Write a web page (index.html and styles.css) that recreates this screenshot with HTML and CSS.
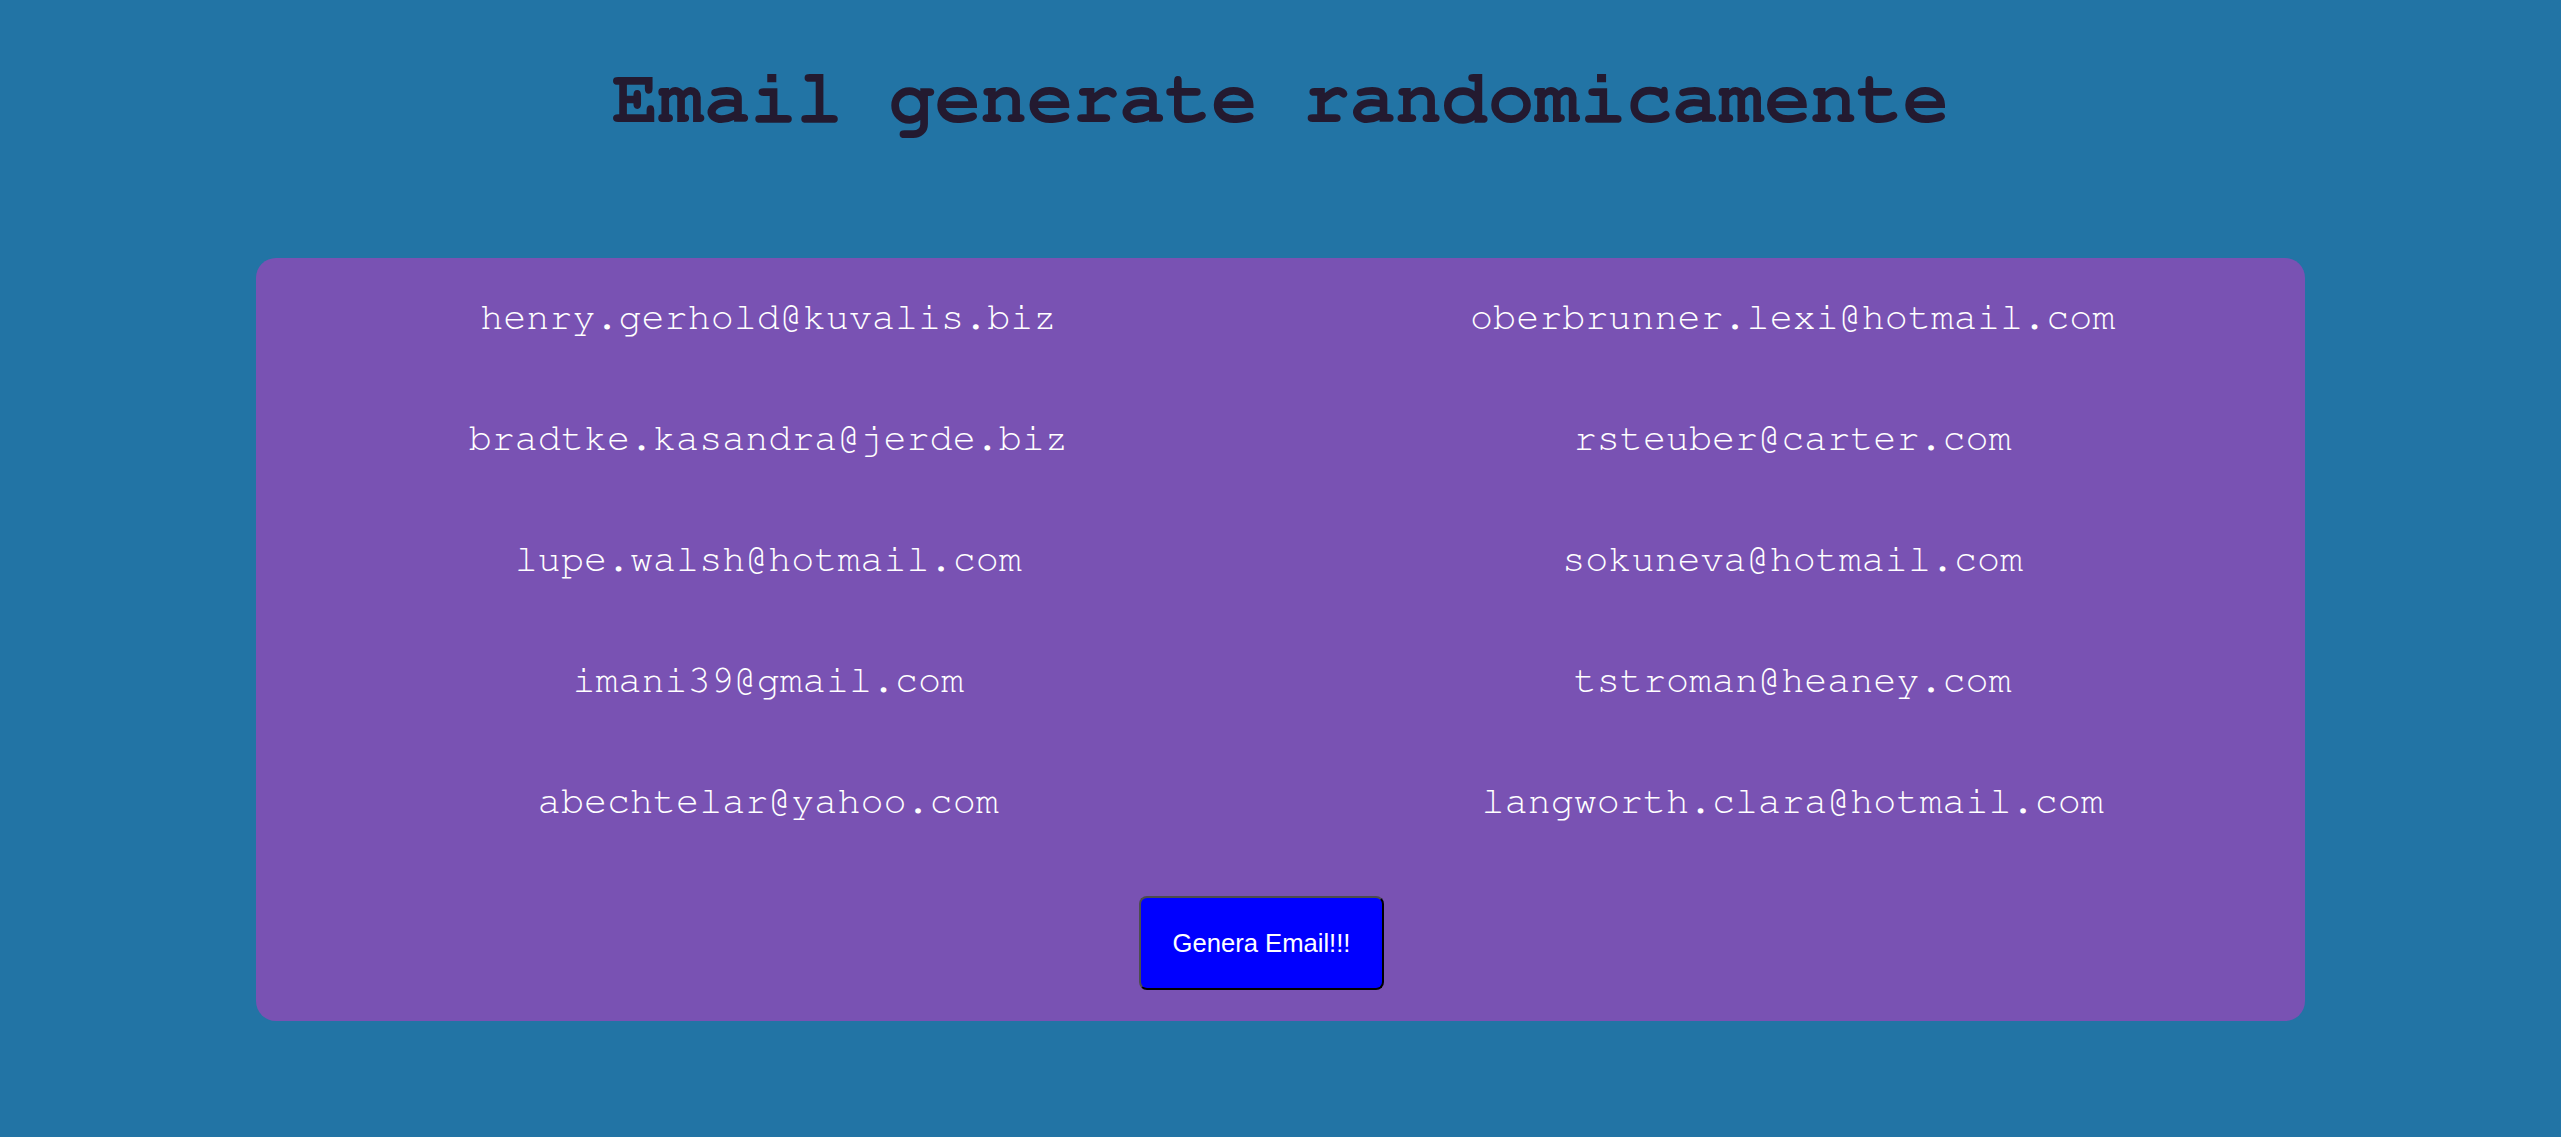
FILE: index.html
```html
<!DOCTYPE html>
<html lang="it">
<head>
<meta charset="utf-8">
<title>Email generate randomicamente</title>
<link rel="stylesheet" href="styles.css">
</head>
<body>
  <h1 class="title">Email generate randomicamente</h1>
  <main class="card">
    <div class="email-grid">
      <p class="email">henry.gerhold@kuvalis.biz</p>
      <p class="email">oberbrunner.lexi@hotmail.com</p>
      <p class="email">bradtke.kasandra@jerde.biz</p>
      <p class="email">rsteuber@carter.com</p>
      <p class="email">lupe.walsh@hotmail.com</p>
      <p class="email">sokuneva@hotmail.com</p>
      <p class="email">imani39@gmail.com</p>
      <p class="email">tstroman@heaney.com</p>
      <p class="email">abechtelar@yahoo.com</p>
      <p class="email">langworth.clara@hotmail.com</p>
    </div>
    <div class="actions">
      <button class="btn" type="button">Genera Email!!!</button>
    </div>
  </main>
</body>
</html>
```

FILE: styles.css
```css
* { box-sizing: border-box; }

html, body {
  margin: 0;
  padding: 0;
}

body {
  background: #2274a5;
  font-family: "Nimbus Mono PS", "Nimbus Mono L", "FreeMono", "Courier New", "Liberation Mono", monospace;
  min-height: 100vh;
  padding-top: 1px;
}

.title {
  font-family: "Nimbus Mono PS", "Nimbus Mono L", "FreeMono", "Courier New", "Liberation Mono", monospace;
  font-weight: bold;
  font-size: 3vw;
  line-height: 87px;
  color: #231a30;
  text-align: center;
  margin: 55px 0 115px;
}

.card {
  width: 80%;
  margin: 0 auto;
  background: #7952b3;
  border-radius: 20px;
  padding-bottom: 31px;
}

.email-grid {
  display: grid;
  grid-template-columns: 1fr 1fr;
}

.email {
  margin: 1em 0;
  font-size: 1.5vw;
  line-height: 44px;
  color: #ffffff;
  text-align: center;
}

.actions {
  display: flex;
  justify-content: center;
  padding-top: 34px;
}

.btn {
  font-family: "Liberation Sans", Arial, sans-serif;
  font-size: 1vw;
  line-height: 30px;
  color: #ffffff;
  background: #0000ff;
  border: 2px solid;
  border-color: #4d4d4d #000000 #000000 #4d4d4d;
  border-radius: 8px;
  padding: 30px 32px;
  margin-right: 38px;
  cursor: pointer;
}
```
